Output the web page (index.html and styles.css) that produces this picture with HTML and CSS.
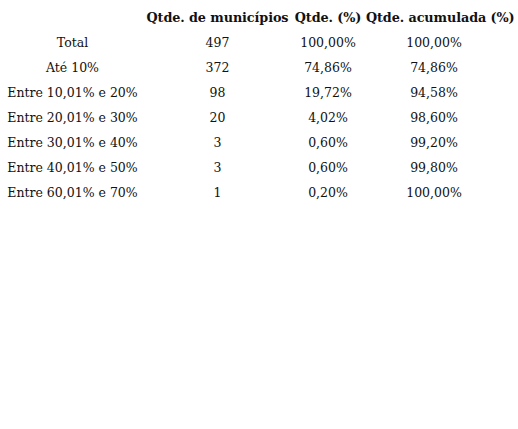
FILE: index.html
```html
<!DOCTYPE html>
<html lang="pt">
<head>
<meta charset="utf-8">
<link rel="stylesheet" href="styles.css">
</head>
<body>
<table class="dist">
  <colgroup>
    <col class="c1"><col class="c2"><col class="c3"><col class="c4">
  </colgroup>
  <thead>
    <tr><th></th><th>Qtde. de municípios</th><th>Qtde. (%)</th><th>Qtde. acumulada (%)</th></tr>
  </thead>
  <tbody>
    <tr><td>Total</td><td>497</td><td>100,00%</td><td>100,00%</td></tr>
    <tr><td>Até 10%</td><td>372</td><td>74,86%</td><td>74,86%</td></tr>
    <tr><td>Entre 10,01% e 20%</td><td>98</td><td>19,72%</td><td>94,58%</td></tr>
    <tr><td>Entre 20,01% e 30%</td><td>20</td><td>4,02%</td><td>98,60%</td></tr>
    <tr><td>Entre 30,01% e 40%</td><td>3</td><td>0,60%</td><td>99,20%</td></tr>
    <tr><td>Entre 40,01% e 50%</td><td>3</td><td>0,60%</td><td>99,80%</td></tr>
    <tr><td>Entre 60,01% e 70%</td><td>1</td><td>0,20%</td><td>100,00%</td></tr>
  </tbody>
</table>
</body>
</html>
```
FILE: styles.css
```css
html, body {
  margin: 0;
  padding: 0;
  background: #ffffff;
}
body {
  padding-top: 5px;
  font-family: "DejaVu Serif", serif;
  color: #111111;
}
.dist {
  border-collapse: collapse;
  table-layout: fixed;
  width: 502px;
}
.c1 { width: 145px; }
.c2 { width: 145px; }
.c3 { width: 76px; }
.c4 { width: 136px; }
.dist th, .dist td {
  padding: 0;
  height: 25px;
  text-align: center;
  white-space: nowrap;
  font-size: 12.5px;
}
.dist th {
  font-weight: bold;
  font-size: 12.8px;
  letter-spacing: -0.1px;
}
```
